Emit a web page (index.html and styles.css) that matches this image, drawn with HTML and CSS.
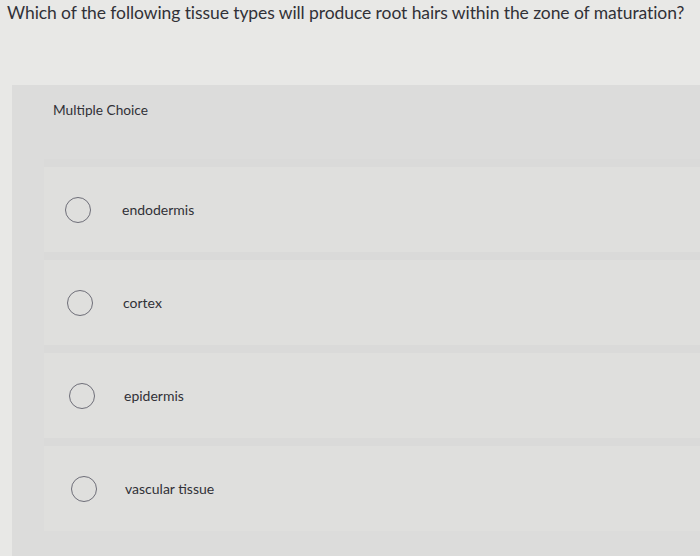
FILE: index.html
```html
<!DOCTYPE html>
<html>
<head>
<meta charset="utf-8">
<link rel="stylesheet" href="styles.css">
</head>
<body>
  <div class="question">Which of the following tissue types will produce root hairs within the zone of maturation?</div>
  <div class="panel">
    <div class="panel-head">Multiple Choice</div>
    <ul class="options">
      <li class="option o1"><span class="radio"></span><span class="label">endodermis</span></li>
      <li class="option o2"><span class="radio"></span><span class="label">cortex</span></li>
      <li class="option o3"><span class="radio"></span><span class="label">epidermis</span></li>
      <li class="option o4"><span class="radio"></span><span class="label">vascular tissue</span></li>
    </ul>
  </div>
</body>
</html>
```

FILE: styles.css
```css
html, body {
  margin: 0;
  padding: 0;
}
body {
  width: 700px;
  height: 556px;
  overflow: hidden;
  background: #e8e8e6;
  font-family: "Lato", "Liberation Sans", sans-serif;
  color: #313137;
}
.question {
  padding: 3px 0 0 7px;
  font-size: 17.5px;
  line-height: 19px;
  white-space: nowrap;
  letter-spacing: -0.08px;
}
.panel {
  margin: 63px 0 0 12px;
  background: #dcdcdb;
  height: 480px;
}
.panel-head {
  height: 74px;
  box-sizing: border-box;
  padding: 17px 0 0 41px;
  font-size: 13.7px;
  line-height: 16px;
}
.options {
  list-style: none;
  margin: 0;
  padding: 0;
}
.option {
  height: 93px;
  display: flex;
  align-items: center;
  background: #dfdfdd;
  margin-left: 32px;
  border-top: 8px solid #dadad9;
  box-sizing: border-box;
}
.radio {
  width: 24px;
  height: 24px;
  border: 1.6px solid #6e6e78;
  border-radius: 50%;
  margin-left: 21px;
  flex: none;
}
.label {
  margin-left: 31px;
  font-size: 14px;
}
.o2 .radio { margin-left: 23px; }
.o3 .radio { margin-left: 25px; }
.o4 .radio { margin-left: 27px; }
.o2 .label { margin-left: 30px; }
.o3 .label { margin-left: 29px; }
.o4 .label { margin-left: 28px; }
```
